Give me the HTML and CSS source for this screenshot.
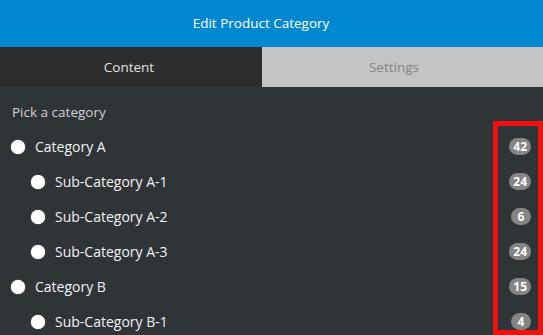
FILE: index.html
```html
<!DOCTYPE html>
<html lang="en">
<head>
  <meta charset="UTF-8" />
  <meta name="viewport" content="width=device-width, initial-scale=1.0"/>
  <title>Edit Product Category</title>
  <link rel="stylesheet" href="styles.css">
</head>
<body>
  <div class="app">
    <div class="titlebar">Edit Product Category</div>

    <div class="tabs">
      <div class="tab active">Content</div>
      <div class="tab">Settings</div>
    </div>

    <div class="content">
      <div class="label">Pick a category</div>
      <ul class="categories">
        <li class="row"><input type="radio" name="cat"><span class="name">Category A</span><span class="badge">42</span></li>
        <li class="row sub"><input type="radio" name="cat"><span class="name">Sub-Category A-1</span><span class="badge">24</span></li>
        <li class="row sub"><input type="radio" name="cat"><span class="name">Sub-Category A-2</span><span class="badge">6</span></li>
        <li class="row sub"><input type="radio" name="cat"><span class="name">Sub-Category A-3</span><span class="badge">24</span></li>
        <li class="row"><input type="radio" name="cat"><span class="name">Category B</span><span class="badge">15</span></li>
        <li class="row sub"><input type="radio" name="cat"><span class="name">Sub-Category B-1</span><span class="badge">4</span></li>
      </ul>
    </div>

    <!-- highlight around the counts column -->
    <div class="highlight"></div>
  </div>
</body>
</html>
```

FILE: styles.css
```css
body {
  margin: 0;
  font-family: "Open Sans", Arial, sans-serif;
  background: #2f3437;
}
.app {
  position: relative;
  height: 335px;
  overflow: hidden;
  background: #2f3437;
}
.titlebar {
  height: 47px;
  line-height: 47px;
  padding-right: 21px;
  background: #0288d1;
  color: #fff;
  text-align: center;
  font-size: 13.5px;
}
.tabs {
  display: grid;
  grid-template-columns: 262px 1fr;
  height: 40px;
}
.tab {
  display: flex;
  align-items: center;
  justify-content: center;
  padding-right: 17px;
  background: #c4c4c4;
  color: #858585;
  font-size: 13.5px;
}
.tab.active {
  padding-right: 4px;
  background: #2d2d2d;
  color: #e2e2e2;
}
.content {
  padding-top: 15px;
}
.label {
  padding-left: 12px;
  color: #cfd2d3;
  font-size: 13.5px;
  line-height: 20px;
}
.categories {
  list-style: none;
  margin: 7px 0 0;
  padding: 0;
}
.row {
  display: flex;
  align-items: center;
  height: 35px;
  padding: 0 12px 0 11px;
  color: #f2f2f2;
  font-size: 14px;
}
.row.sub {
  padding-left: 31px;
}
.row input[type="radio"] {
  appearance: none;
  -webkit-appearance: none;
  width: 14px;
  height: 14px;
  margin: 0 10px 0 0;
  border-radius: 50%;
  background: #fff;
  box-shadow: 0 0 1px #fff;
}
.name {
  flex: 1;
}
.badge {
  min-width: 20px;
  height: 17px;
  line-height: 17px;
  padding: 0 4px;
  box-sizing: border-box;
  border-radius: 9px;
  background: #858585;
  color: #fff;
  font-size: 12px;
  font-weight: bold;
  text-align: center;
}
.highlight {
  position: absolute;
  top: 121px;
  right: 0;
  width: 50px;
  height: 214px;
  box-sizing: border-box;
  border: 5px solid #f01010;
}
```
